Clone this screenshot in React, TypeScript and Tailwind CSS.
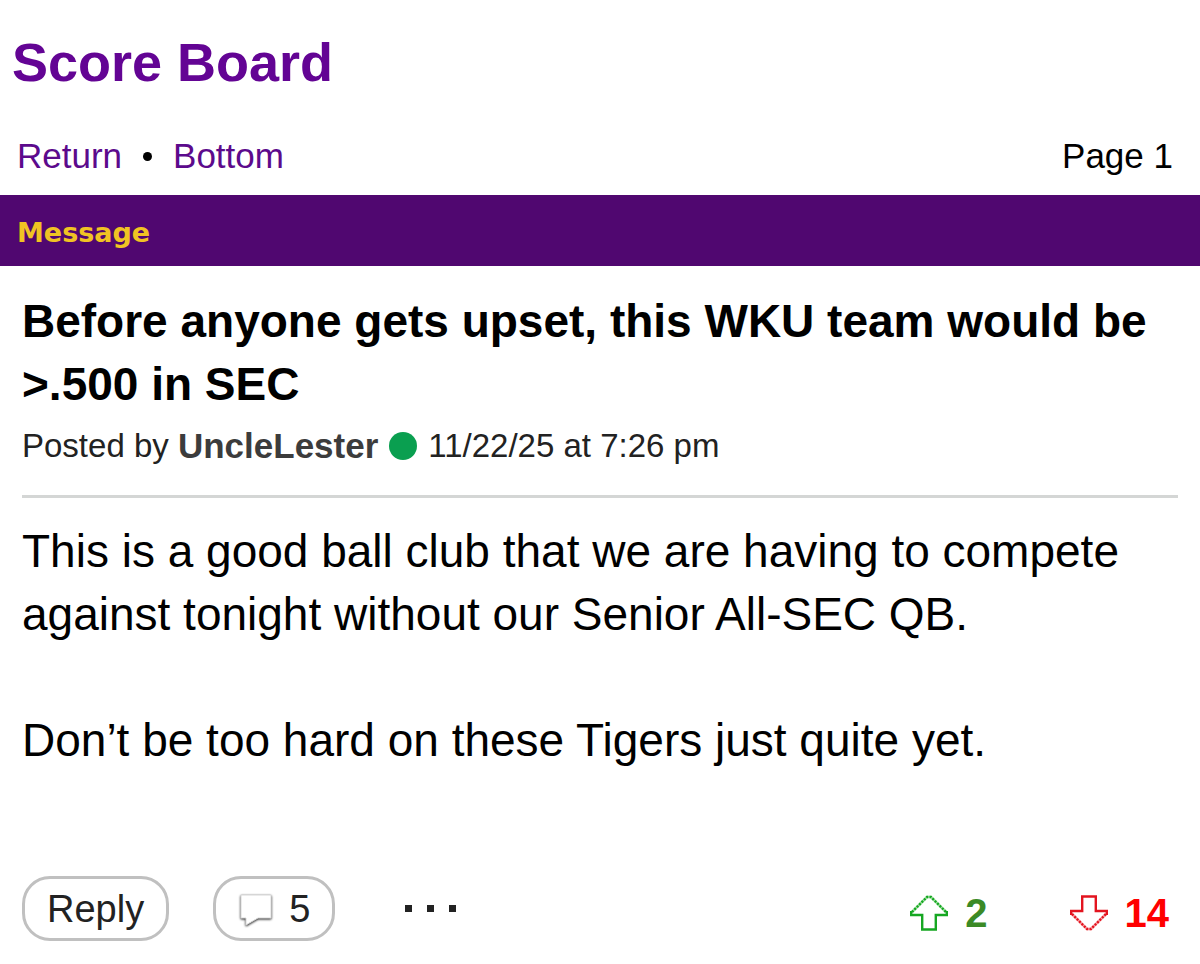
import React from "react";

function CommentIcon() {
  return (
    <svg width="36" height="36" viewBox="0 0 36 36" aria-hidden="true" className="overflow-visible">
      <path
        d="M3 4H33V27H20L8 34V27H3Z"
        fill="#ffffff"
        stroke="#d8d8d8"
        strokeWidth="1"
        className="drop-shadow-[0px_1px_1px_rgba(0,0,0,0.85)]"
      />
    </svg>
  );
}

function ArrowIcon({ down = false }: { down?: boolean }) {
  const main = down ? "#e3141f" : "#16a722";
  const soft = down ? "#f7999d" : "#98dd9a";
  return (
    <svg
      width="38"
      height="36"
      viewBox="0 0 38 36"
      fill="none"
      aria-hidden="true"
      className={down ? "-scale-y-100" : ""}
    >
      <path d="M2 17L17 2H21L36 17" stroke={soft} strokeWidth="2.6" />
      <path d="M2 17L17 2H21L36 17" stroke={main} strokeWidth="2.4" strokeDasharray="2 1.4" />
      <path d="M1.2 16V20H12.2V34.5H25.8V20H36.8V16" stroke={main} strokeWidth="2.4" />
    </svg>
  );
}

export default function App() {
  return (
    <div className="min-h-screen bg-white font-['Liberation_Sans',Arial,sans-serif] text-black">
      <header>
        <h1 className="px-3 pt-8 text-[54px] leading-[60px] font-bold text-[#630494]">Score Board</h1>
        <nav className="flex items-center justify-between pt-10 pr-[27px] pb-[15px] pl-[17px] text-[35px] leading-[48px]">
          <div className="flex items-center gap-[21px]">
            <a href="#return" className="text-[#5c0a8c]">Return</a>
            <span className="size-[9px] rounded-full bg-black" />
            <a href="#bottom" className="text-[#5c0a8c]">Bottom</a>
          </div>
          <span>Page 1</span>
        </nav>
      </header>
      <div className="bg-[#500770] px-[17px] pt-[18px] pb-[14px] font-['DejaVu_Sans',Verdana,sans-serif] text-[27px] leading-[39px] font-bold text-[#f0c323]">
        Message
      </div>
      <main className="px-[22px] pt-6">
        <article>
          <h2 className="text-[46px] leading-[63px] font-bold">
            Before anyone gets upset, this WKU team would be &gt;.500 in SEC
          </h2>
          <div className="flex items-center pt-2 text-[33px] leading-[44px] text-[#222222]">
            <span>Posted by&nbsp;</span>
            <a href="#user" className="text-[35px] font-bold text-[#3c3c3c]">UncleLester</a>
            <span className="mx-[11px] size-7 rounded-full bg-[#0a9f50]" />
            <time>11/22/25 at 7:26 pm</time>
          </div>
          <hr className="mt-[27px] border-t-[3px] border-[#d4d6d5]" />
          <div className="pt-[22px] text-[46px] leading-[63px]">
            <p>This is a good ball club that we are having to compete against tonight without our Senior All-SEC QB.</p>
            <p className="pt-[63px]">Don’t be too hard on these Tigers just quite yet.</p>
          </div>
        </article>
        <footer className="flex items-center justify-between pt-[104px] pb-5 text-[#222222]">
          <div className="flex items-center gap-11">
            <button type="button" className="h-[65px] rounded-[28px] border-[3px] border-[#c0c0c0] px-[22px] text-[38px] leading-[44px]">
              Reply
            </button>
            <button type="button" className="flex h-[65px] items-center gap-[15px] rounded-[28px] border-[3px] border-[#c0c0c0] px-[22px] text-[38px] leading-[44px]">
              <CommentIcon />
              5
            </button>
            <button type="button" aria-label="More" className="ml-[26px] flex gap-[15px]">
              <span className="size-[7px] bg-[#222222]" />
              <span className="size-[7px] bg-[#222222]" />
              <span className="size-[7px] bg-[#222222]" />
            </button>
          </div>
          <div className="flex items-center gap-[82px] pt-2 pr-[9px] text-[40px] leading-[48px] font-bold">
            <button type="button" className="flex items-center gap-[17px] text-[#3b8a26]">
              <ArrowIcon />
              2
            </button>
            <button type="button" className="flex items-center gap-[17px] text-[#ff0000]">
              <ArrowIcon down />
              14
            </button>
          </div>
        </footer>
      </main>
    </div>
  );
}
